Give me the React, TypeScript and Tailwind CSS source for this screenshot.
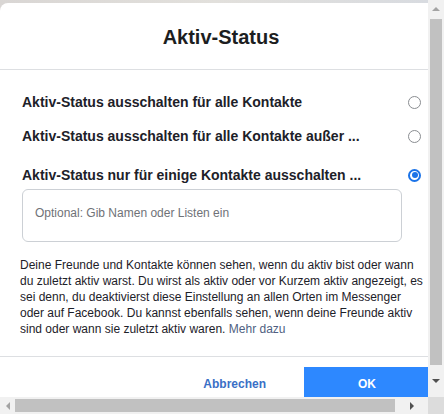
import React from "react";

const font = { fontFamily: '"Liberation Sans", Arial, Helvetica, sans-serif' };

function Radio({ checked }: { checked?: boolean }) {
  if (checked) {
    return (
      <div className="w-[13px] h-[13px] rounded-full border-2 border-[#1a73e8] flex items-center justify-center shrink-0">
        <div className="w-[6px] h-[6px] rounded-full bg-[#1a73e8]" />
      </div>
    );
  }
  return <div className="w-[13px] h-[13px] rounded-full border border-[#8a8d91] bg-white shrink-0" />;
}

function Option({ label, checked, mt }: { label: string; checked?: boolean; mt: string }) {
  return (
    <div className={`flex items-center justify-between h-[18px] ${mt}`}>
      <span className="text-[14px] font-bold text-[#1d2129] leading-[18px] whitespace-nowrap">{label}</span>
      <Radio checked={checked} />
    </div>
  );
}

export default function App() {
  return (
    <div className="w-[444px] h-[414px] overflow-hidden flex flex-col bg-[#dcdcdc]" style={font}>
      <div className="flex h-[397px]">
        {/* viewport */}
        <div className="w-[428px] h-[397px] overflow-hidden bg-gradient-to-r from-[#d9d6d4] via-[#e2e0dc] to-[#d8dbe0]">
          <div className="w-[442px] mt-[3px] bg-white rounded-t-[8px]">
            <div className="h-[67px] border-b border-[#dddfe2] flex items-center justify-center">
              <h1 className="text-[20px] font-bold text-[#1c1e21] leading-[24px] pt-[1px]">Aktiv-Status</h1>
            </div>
            <div className="pl-[22px] pr-[21px]">
              <Option mt="mt-[23px]" label="Aktiv-Status ausschalten für alle Kontakte" />
              <Option mt="mt-[16px]" label="Aktiv-Status ausschalten für alle Kontakte außer ..." />
              <Option mt="mt-[21px]" label="Aktiv-Status nur für einige Kontakte ausschalten ..." checked />
              <div className="mt-[5px] w-[380px] h-[53px] border border-[#ccd0d5] rounded-[6px] px-[12px] pt-[10px]">
                <span className="text-[12px] text-[#6f7277] leading-[16px]">Optional: Gib Namen oder Listen ein</span>
              </div>
            </div>
            <p className="px-[20px] mt-[15px] pb-[19px] text-[12px] leading-[16px] text-[#1d2129] whitespace-nowrap">
              Deine Freunde und Kontakte können sehen, wenn du aktiv bist oder wann
              <br />
              du zuletzt aktiv warst. Du wirst als aktiv oder vor Kurzem aktiv angezeigt, es
              <br />
              sei denn, du deaktivierst diese Einstellung an allen Orten im Messenger
              <br />
              oder auf Facebook. Du kannst ebenfalls sehen, wenn deine Freunde aktiv
              <br />
              sind oder wann sie zuletzt aktiv waren. <span className="text-[#4f5f82]">Mehr dazu</span>
            </p>
            <div className="border-t border-[#dddfe2] pt-[10px] pr-[12px] flex justify-end items-start gap-[8px]">
              <button className="h-[34px] px-[30px] text-[12px] font-bold text-[#3a6fc6]">Abbrechen</button>
              <button className="h-[34px] w-[126px] bg-[#2d88ff] text-[12px] font-bold text-white">OK</button>
            </div>
          </div>
        </div>
        {/* vertical scrollbar */}
        <div className="w-[16px] h-[397px] bg-[#f1f1f1] flex flex-col items-center">
          <div className="h-[17px] flex items-center justify-center">
            <div className="w-0 h-0 border-l-[4px] border-r-[4px] border-b-[4px] border-l-transparent border-r-transparent border-b-[#a3a3a3]" />
          </div>
          <div className="w-[12px] h-[346px] mt-[2px] bg-[#c1c1c1]" />
          <div className="flex-1 flex items-center justify-center">
            <div className="w-0 h-0 border-l-[4px] border-r-[4px] border-t-[4px] border-l-transparent border-r-transparent border-t-[#505050]" />
          </div>
        </div>
      </div>
      {/* horizontal scrollbar */}
      <div className="flex h-[17px]">
        <div className="w-[428px] h-[17px] bg-[#f1f1f1] flex items-center">
          <div className="w-[15px] flex items-center justify-center">
            <div className="w-0 h-0 border-t-[4px] border-b-[4px] border-r-[4px] border-t-transparent border-b-transparent border-r-[#a3a3a3]" />
          </div>
          <div className="w-[380px] h-[13px] bg-[#c1c1c1]" />
          <div className="flex-1 flex items-center justify-center">
            <div className="w-0 h-0 border-t-[4px] border-b-[4px] border-l-[4px] border-t-transparent border-b-transparent border-l-[#505050]" />
          </div>
        </div>
        <div className="w-[16px] h-[17px] bg-[#dcdcdc]" />
      </div>
    </div>
  );
}
